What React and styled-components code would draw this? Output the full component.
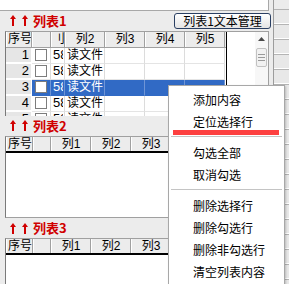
import styled, { createGlobalStyle } from "styled-components";

const GlobalStyle = createGlobalStyle`
  html, body {
    margin: 0;
    padding: 0;
    background: #ececec;
    overflow: hidden;
  }
  body {
    font-family: "Liberation Sans", "Noto Sans CJK SC", sans-serif;
    font-size: 12px;
    color: #000;
  }
`;

const Screen = styled.div`
  position: relative;
  width: 289px;
  height: 284px;
  overflow: hidden;
  display: flex;
  background: #ececec;
`;

const MainColumn = styled.div`
  width: 271px;
  display: flex;
  flex-direction: column;
`;

const RightRail = styled.div`
  flex: 1;
  display: flex;
  flex-direction: column;
  padding-top: 9px;
  margin-left: 2px;
  border-left: 1px solid #9c9c9c;
`;

const RailCell = styled.div`
  height: 15px;
  flex: none;
  box-sizing: border-box;
  border-top: 1px solid #b4b4b4;
  border-bottom: 1px solid #fff;
  background: #e8e8e8;
`;

const TopBox = styled.div`
  height: 10px;
  margin-right: 2px;
  background: #fff;
  border-bottom: 1px solid #a8a8a8;
  border-right: 1px solid #a8a8a8;
`;

const TitleBar = styled.div`
  height: 20px;
  display: flex;
  align-items: center;
  justify-content: space-between;
  padding-left: 10px;
`;

const Title = styled.div`
  display: flex;
  align-items: center;
  gap: 6px;
  color: #d00000;
  font-weight: bold;
  font-size: 13px;
  font-family: "Noto Sans CJK SC", "Liberation Sans", sans-serif;
`;

const TitleText = styled.span`
  margin-left: -1px;
  line-height: 14px;
`;

const ManageButton = styled.button`
  height: 16px;
  width: 97px;
  padding: 0;
  margin: 0;
  border: 1px solid #2a3f62;
  border-radius: 3px;
  background: linear-gradient(#ffffff, #e4e4e4);
  font-family: "Noto Sans CJK SC", "Liberation Sans", sans-serif;
  font-size: 12px;
  line-height: 13px;
  color: #000;
`;

const ListBox = styled.div`
  height: ${(p) => p.$h}px;
  margin-left: 5px;
  margin-right: 2px;
  box-sizing: border-box;
  background: #fff;
  border-top: 1px solid #a0a0a0;
  border-left: 1px solid #7a7a7a;
  border-right: 1px solid #a0a0a0;
  border-bottom: ${(p) => (p.$bottom ? "1px solid #a0a0a0" : "none")};
  display: flex;
  overflow: hidden;
`;

const GridArea = styled.div`
  width: ${(p) => p.$w}px;
  flex: none;
  border-right: ${(p) => (p.$edge ? "1px solid #000" : "none")};
  display: flex;
  flex-direction: column;
`;

const HeaderRow = styled.div`
  display: flex;
  height: ${(p) => p.$h}px;
  flex: none;
  border-bottom: ${(p) => (p.$heavy ? "2px solid #000" : "1px solid #a0a0a0")};
  background: #ececec;
`;

const HeaderCell = styled.div`
  width: ${(p) => p.$w}px;
  flex: none;
  box-sizing: border-box;
  border-left: 1px solid #fff;
  border-right: 1px solid #a0a0a0;
  display: flex;
  align-items: center;
  justify-content: ${(p) => (p.$left ? "flex-start" : "center")};
  padding-left: ${(p) => (p.$left ? "1px" : "0")};
  overflow: hidden;
  white-space: nowrap;
  font-size: 12px;
  line-height: 12px;
`;

const HeaderFill = styled.div`
  flex: 1;
  background: #ececec;
`;

const Row = styled.div`
  display: flex;
  height: 16px;
  flex: none;
`;

const NumCell = styled.div`
  width: ${(p) => p.$w}px;
  flex: none;
  box-sizing: border-box;
  background: #e6e6e6;
  border-bottom: 2px solid #fff;
  border-right: 1px solid #fff;
  text-align: right;
  padding-right: 2px;
  font-size: 13px;
  line-height: 14px;
`;

const DataCell = styled.div`
  width: ${(p) => p.$w}px;
  flex: none;
  box-sizing: border-box;
  background: ${(p) => (p.$sel ? "#316ac5" : "#fff")};
  color: ${(p) => (p.$sel ? "#fff" : "#000")};
  border-right: 1px solid ${(p) => (p.$sel ? "#6f95d6" : "#dcdcdc")};
  border-bottom: 1px solid ${(p) => (p.$sel ? "#316ac5" : "#e4e4e4")};
  display: flex;
  align-items: center;
  justify-content: ${(p) => (p.$center ? "center" : "flex-start")};
  padding-left: ${(p) => (p.$center ? 0 : 2)}px;
  overflow: hidden;
  white-space: nowrap;
  font-size: 12px;
  line-height: 14px;
`;

const Clip = styled.span`
  display: inline-block;
  width: ${(p) => p.$w}px;
  overflow: hidden;
  font-family: "Liberation Sans", sans-serif;
  font-size: 13px;
`;

const CheckBox = styled.span`
  width: 12px;
  height: 12px;
  box-sizing: border-box;
  background: #fff;
  border: 1px solid #7d7d7d;
`;

const Filler = styled.div`
  flex: 1;
  background: #fff;
`;

const ScrollBar = styled.div`
  width: 13px;
  flex: none;
  background: #f7f7f7;
  display: flex;
  flex-direction: column;
  align-items: center;
`;

const ScrollArrow = styled.div`
  height: 15px;
  display: flex;
  align-items: center;
  justify-content: center;
`;

const ScrollThumb = styled.div`
  margin-top: 1px;
  width: 11px;
  height: 19px;
  box-sizing: border-box;
  border: 1px solid #c2c2c2;
  border-radius: 2px;
  background: #f1f1f1;
  display: flex;
  flex-direction: column;
  align-items: center;
  justify-content: center;
  gap: 2px;
`;

const Grip = styled.span`
  width: 7px;
  height: 1px;
  background: #9a9a9a;
`;

const Menu = styled.div`
  position: absolute;
  left: 168px;
  top: 85px;
  width: 117px;
  height: 210px;
  box-sizing: border-box;
  background: #fff;
  border: 1px solid #a8a8a8;
  box-shadow: 1px 1px 2px rgba(0, 0, 0, 0.2);
  padding-top: 2px;
  font-family: "Noto Sans CJK SC", "Liberation Sans", sans-serif;
`;

const MenuItem = styled.div`
  height: 22px;
  display: flex;
  align-items: center;
  padding-left: 24px;
  font-size: 12px;
  color: #000;
`;

const Separator = styled.div`
  height: 9px;
  display: flex;
  align-items: center;
  padding: 0 2px;
  &::after {
    content: "";
    flex: 1;
    height: 1px;
    background: #c4c4c4;
  }
`;

const Marker = styled.div`
  position: absolute;
  left: 4px;
  top: 44px;
  width: 106px;
  height: 5px;
  background: #fd4040;
`;

const UpArrow = () => (
  <svg width="6" height="11" viewBox="0 0 6 11">
    <polygon points="3,0 6,4 4,4 4,11 2,11 2,4 0,4" fill="#d00000" />
  </svg>
);

const SectionTitle = ({ n, children }) => (
  <TitleBar>
    <Title>
      <UpArrow />
      <UpArrow />
      <TitleText>列表{n}</TitleText>
    </Title>
    {children}
  </TitleBar>
);

const cols1 = [
  { label: "序号", w: 26, left: true },
  { label: "", w: 19 },
  { label: "刂", w: 14, left: true },
  { label: "列2", w: 40 },
  { label: "列3", w: 40 },
  { label: "列4", w: 40 },
  { label: "列5", w: 40 },
];

const cols2 = [
  { label: "序号", w: 27, left: true },
  { label: "", w: 18 },
  { label: "列1", w: 40 },
  { label: "列2", w: 40 },
  { label: "列3", w: 40 },
  { label: "列4", w: 40 },
  { label: "列5", w: 40 },
];

const rows = [1, 2, 3, 4, 5];

function EmptyList({ h, bottom }) {
  return (
    <ListBox $h={h} $bottom={bottom}>
      <GridArea $w={262}>
        <HeaderRow $h={14} $heavy>
          {cols2.map((c, i) => (
            <HeaderCell key={i} $w={c.w} $left={c.left}>
              {c.label}
            </HeaderCell>
          ))}
          <HeaderFill />
        </HeaderRow>
      </GridArea>
    </ListBox>
  );
}

export default function App() {
  return (
    <>
      <GlobalStyle />
      <Screen>
        <MainColumn>
          <TopBox />
          <SectionTitle n={1}>
            <ManageButton>列表1文本管理</ManageButton>
          </SectionTitle>
          <ListBox $h={85}>
            <GridArea $w={220} $edge>
              <HeaderRow $h={15}>
                {cols1.map((c, i) => (
                  <HeaderCell key={i} $w={c.w} $left={c.left}>
                    {c.label}
                  </HeaderCell>
                ))}
              </HeaderRow>
              {rows.map((r) => {
                const sel = r === 3;
                return (
                  <Row key={r}>
                    <NumCell $w={26}>{r}</NumCell>
                    <DataCell $w={19} $sel={sel} $center>
                      <CheckBox />
                    </DataCell>
                    <DataCell $w={14} $sel={sel}>
                      <Clip $w={10}>58</Clip>
                    </DataCell>
                    <DataCell $w={40} $sel={sel}>
                      读文件
                    </DataCell>
                    <DataCell $w={40} $sel={sel} />
                    <DataCell $w={40} $sel={sel} />
                    <DataCell $w={40} $sel={sel} />
                  </Row>
                );
              })}
            </GridArea>
            <Filler />
            <ScrollBar>
              <ScrollArrow>
                <svg width="7" height="4" viewBox="0 0 7 4">
                  <polygon points="3.5,0 7,4 0,4" fill="#4a4a4a" />
                </svg>
              </ScrollArrow>
              <ScrollThumb>
                <Grip />
                <Grip />
                <Grip />
              </ScrollThumb>
            </ScrollBar>
          </ListBox>
          <SectionTitle n={2} />
          <EmptyList h={83} bottom />
          <SectionTitle n={3} />
          <EmptyList h={46} />
        </MainColumn>
        <RightRail>
          {Array.from({ length: 19 }).map((_, i) => (
            <RailCell key={i} />
          ))}
        </RightRail>
        <Menu>
          <MenuItem>添加内容</MenuItem>
          <MenuItem>定位选择行</MenuItem>
          <Separator />
          <MenuItem>勾选全部</MenuItem>
          <MenuItem>取消勾选</MenuItem>
          <Separator />
          <MenuItem>删除选择行</MenuItem>
          <MenuItem>删除勾选行</MenuItem>
          <MenuItem>删除非勾选行</MenuItem>
          <MenuItem>清空列表内容</MenuItem>
          <Marker />
        </Menu>
      </Screen>
    </>
  );
}
